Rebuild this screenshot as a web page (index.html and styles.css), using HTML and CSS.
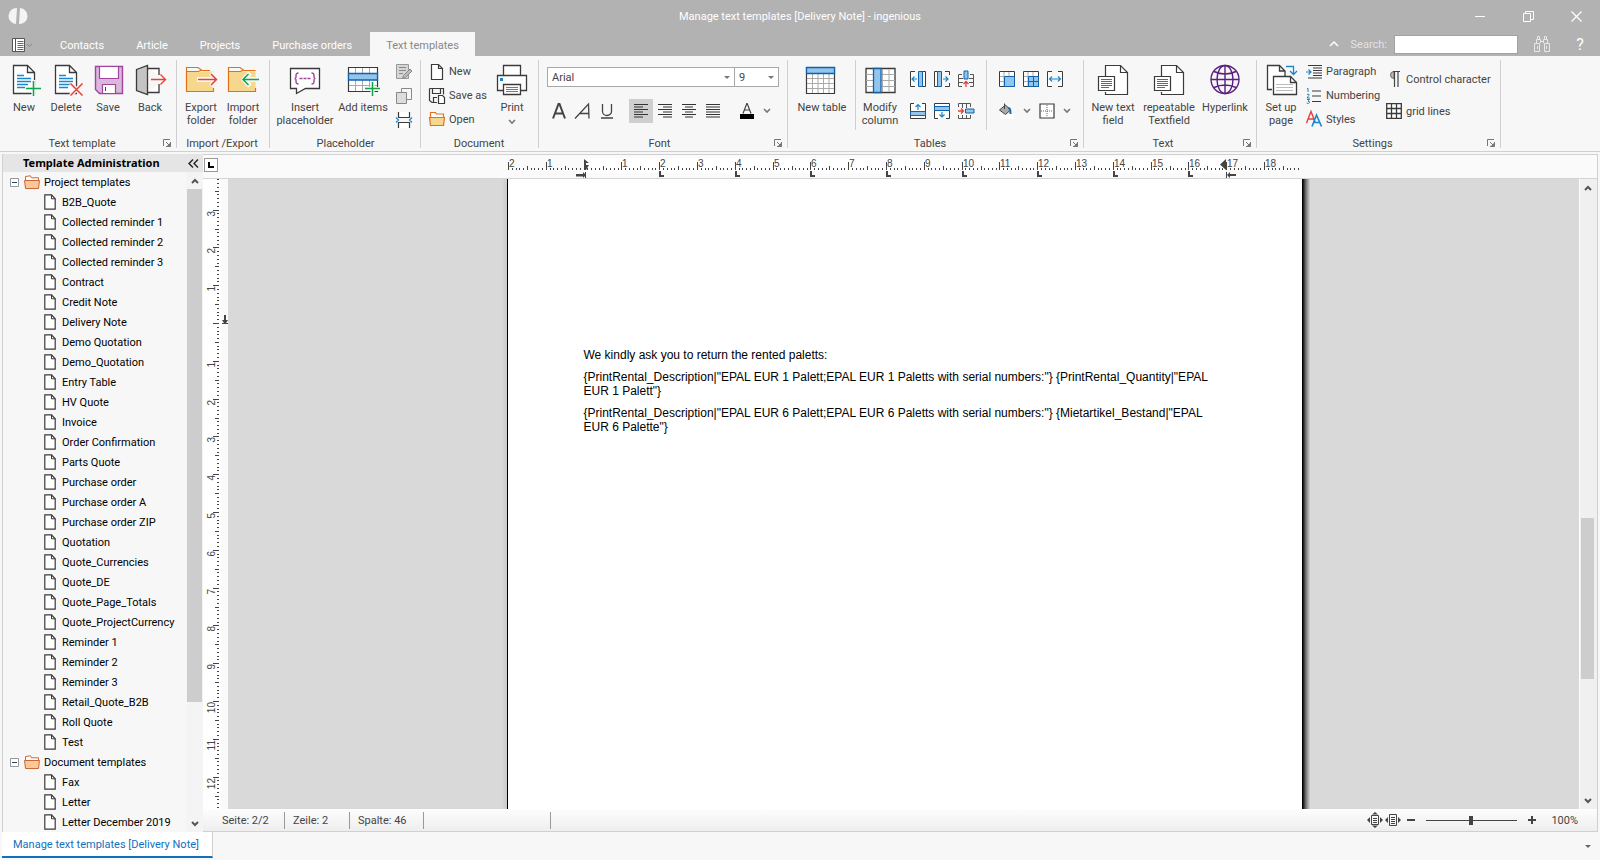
FILE: index.html
```html
<!DOCTYPE html>
<html lang="en">
<head>
<meta charset="utf-8">
<title>Manage text templates [Delivery Note] - ingenious</title>
<link rel="stylesheet" href="styles.css">
</head>
<body>
<svg class="defs" aria-hidden="true">
  <symbol id="i-chev" viewBox="0 0 8 6"><path d="M1 1l3 3 3-3" fill="none" stroke="#777" stroke-width="1.6"/></symbol>
  <symbol id="i-launch" viewBox="0 0 8 8"><path d="M.5 7V.5H7M7.500 3v4.500H3M3 3l3.500 3.500" fill="none" stroke="#777"/><path d="M7.500 3.500v4h-4z" fill="#777"/></symbol>
  <symbol id="i-page" viewBox="0 0 12 16"><path d="M.8.8h6.700l3.700 4v10.400H.8z" fill="#fff" stroke="#3a3a3a" stroke-width="1.200"/><path d="M7.500.8v4h3.700" fill="none" stroke="#3a3a3a"/></symbol>
  <symbol id="i-treefolder" viewBox="0 0 16 14"><path d="M1.500 12V1.500l5-.7 1 2h7V5" fill="#fff" stroke="#c8683a"/><path d="M.5 5.500h15l-1 8h-13z" fill="#fdc795" stroke="#c8683a"/></symbol>
  <symbol id="i-doc" viewBox="0 0 32 32"><path d="M5.500 1.500h14l7 7V29.500h-21z" fill="#fff" stroke="#3a3a3a" stroke-width="1.300"/><path d="M19.500 1.500v7h7" fill="none" stroke="#3a3a3a" stroke-width="1.300"/><path d="M9 11.500h7M9 14.500h14M9 17.500h14M9 20.500h11M9 23.500h9" stroke="#1b87c9" stroke-width="1.300"/></symbol>
  <symbol id="i-textfield" viewBox="0 0 32 32"><path d="M8.500 12V1.500h15l7 7v22h-22V28" fill="#fff" stroke="#3a3a3a" stroke-width="1.200"/><path d="M23.500 1.500v7h7" fill="none" stroke="#3a3a3a" stroke-width="1.200"/><path d="M1.500 12.500h16v14h-16z" fill="#fff" stroke="#3a3a3a" stroke-width="1.200"/><path d="M4 15.500h11M4 17.500h11M4 19.500h11M4 21.500h11M4 23.500h8" stroke="#666"/></symbol>
</svg>

<header class="titlebar">
  <svg class="logo" viewBox="0 0 16 16"><path d="M7 0 6 16A8 8 0 0 1 7 0zM10 0 9 16A8 8 0 0 0 10 0z" fill="#f4f4f4"/></svg>
  <h1 class="title">Manage text templates [Delivery Note] - ingenious</h1>
  <div class="window-buttons">
    <button aria-label="Minimise"><svg width="11" height="11" viewBox="0 0 11 11"><path d="M0 5.500h10" stroke="#fff"/></svg></button>
    <button aria-label="Restore"><svg width="11" height="11" viewBox="0 0 11 11"><path d="M.5 2.500h7v8h-7zM2.500 2.500v-2h8v8h-3" fill="none" stroke="#fff"/></svg></button>
    <button aria-label="Close"><svg width="11" height="11" viewBox="0 0 11 11"><path d="M.5.5l10 10M10.500.5l-10 10" stroke="#fff" stroke-width="1.200"/></svg></button>
  </div>
</header>

<nav class="tabs">
  <button class="app-menu" aria-label="Menu"><svg width="20" height="14" viewBox="0 0 20 14"><path d="M.5.5h12v13H.5z" fill="#fff" stroke="#555"/><path d="M3.500 0v14" stroke="#555"/><path d="M5.500 3.500h6M5.500 5.500h6M5.500 7.500h6M5.500 9.500h6M5.500 11.500h6" stroke="#666"/><path d="M15 6l2.500 2.500L20 6" fill="none" stroke="#888"/></svg></button>
  <button class="tab">Contacts</button>
  <button class="tab">Article</button>
  <button class="tab">Projects</button>
  <button class="tab">Purchase orders</button>
  <button class="tab tab-active">Text templates</button>
  <div class="tabs-tools">
    <button aria-label="Collapse ribbon"><svg width="10" height="6" viewBox="0 0 10 6"><path d="M1 5l4-4 4 4" fill="none" stroke="#fff" stroke-width="1.500"/></svg></button>
    <label class="search-label" for="search">Search:</label>
    <input class="search" id="search" type="text">
    <button class="find" aria-label="Find"><svg width="16" height="16" viewBox="0 0 16 16"><path d="M.5 7.500h5v8h-5zM10.500 7.500h5v8h-5zM2.500 7V3.500h4V7M9.500 7V3.500h4V7M3.500 3V.5h2V3M10.500 3V.5h2V3M6.500 5.500h3M3.500 10v3M12.500 10v3" fill="none" stroke="#e8e8e8"/></svg></button>
    <button class="help" aria-label="Help">?</button>
  </div>
</nav>

<section class="ribbon">
  <div class="group g-template has-launcher">
    <div class="group-body">
      <button class="big"><svg class="ico"><use href="#i-doc"/><path d="M25.500 16v16M17 24.500h16" stroke="#f7f7f7" stroke-width="4"/><path d="M25.500 17v15M18 24.500h15" stroke="#10a54a" stroke-width="1.500"/></svg><span>New</span></button>
      <button class="big"><svg class="ico"><use href="#i-doc"/><path d="M20.500 19.500l12 12M32.500 19.500l-12 12" stroke="#f7f7f7" stroke-width="4"/><path d="M20.500 19.500l12 12M32.500 19.500l-12 12" stroke="#e8403a" stroke-width="1.500"/></svg><span>Delete</span></button>
      <button class="big"><svg class="ico"><path d="M3.500 2.500h27v27h-23l-4-4z" fill="#dab8dc" stroke="#a0449c" stroke-width="1.400"/><path d="M7.500 2.500h19v12h-19zM10.500 20.500h13v9h-13z" fill="#fff" stroke="#a0449c" stroke-width="1.200"/><path d="M13.500 23v4" stroke="#444"/></svg><span>Save</span></button>
      <button class="big"><svg class="ico"><path d="M13.500 4.500H25V11M25 20v8.500H13.500" fill="#fff" stroke="#3a3a3a" stroke-width="1.300"/><path d="M2.500 5.500l11-4v29l-11-4z" fill="#c4c4c4" stroke="#3a3a3a" stroke-width="1.300"/><path d="M17 15.500h14M26.500 10.500l5 5-5 5" fill="none" stroke="#e8403a" stroke-width="1.400"/></svg><span>Back</span></button>
    </div>
    <div class="group-label">Text template</div>
    <button class="launcher" aria-label="More"><svg><use href="#i-launch"/></svg></button>
  </div>

  <div class="group g-io">
    <div class="group-body">
      <button class="big"><svg class="ico"><path d="M1.500 7.500H28.500V27.500H1.500z" fill="#f6d78e"/><path d="M12 15.500h20M26 9l6 6.500-6 6.500" fill="none" stroke="#f7f7f7" stroke-width="5"/><path d="M1.500 7.500V3.500H13l4 3h8M28.500 24v3.500h-27v-20h12l3-1.500" fill="none" stroke="#e4701e" stroke-width="1.200"/><path d="M13 15.500h18M26 10l5.500 5.500-5.500 5.500" fill="none" stroke="#e8403a" stroke-width="1.500"/></svg><span>Export folder</span></button>
      <button class="big"><svg class="ico"><path d="M1.500 7.500H28.500V27.500H1.500z" fill="#f6d78e"/><path d="M17 15.500h15M23 9l-6 6.500 6 6.500" fill="none" stroke="#f7f7f7" stroke-width="5"/><path d="M1.500 7.500V3.500H13l4 3h11.500M28.500 24v3.500h-27v-20h12l3-1.500" fill="none" stroke="#e4701e" stroke-width="1.200"/><path d="M15.500 15.500H32M21.500 10l-5.500 5.500 5.500 5.500" fill="none" stroke="#10a54a" stroke-width="1.500"/></svg><span>Import folder</span></button>
    </div>
    <div class="group-label">Import /Export</div>
  </div>

  <div class="group g-placeholder">
    <div class="group-body">
      <button class="big wide"><svg class="ico"><path d="M1.500 4.500h29v20h-14l-9 5v-5h-6z" fill="#fff" stroke="#3a3a3a" stroke-width="1.300"/><path d="M9.500 9C7 9 7 10 7 12s0 2.500-1.500 2.500C7 14.500 7 15 7 17s0 3 2.500 3M22.500 9C25 9 25 10 25 12s0 2.500 1.500 2.500C25 14.500 25 15 25 17s0 3-2.500 3" fill="none" stroke="#a0449c" stroke-width="1.500"/><path d="M10.500 14.500h11" stroke="#a0449c" stroke-width="1.500" stroke-dasharray="3 1"/></svg><span>Insert placeholder</span></button>
      <button class="big wide"><svg class="ico"><path d="M1.500 3.500h29v24h-29z" fill="#fff" stroke="#3a3a3a" stroke-width="1.200"/><path d="M8.500 4v23M15.500 4v23M22.500 4v23M2 21.500h28" stroke="#aaa"/><path d="M1.500 9.500h29v6.500h-29z" fill="#92c5eb" stroke="#1062ad" stroke-width="1.300"/><path d="M25.500 17v16M18 25h15" stroke="#f7f7f7" stroke-width="4"/><path d="M25.500 18v14M18 24.500h15" stroke="#10a54a" stroke-width="1.500"/></svg><span>Add items</span></button>
      <div class="stack">
        <button class="tool" aria-label="Edit"><svg class="sm"><path d="M.5.5h12v14H.5z" fill="#d6d6d6" stroke="#999"/><path d="M3 3.500h7M3 6.500h7M3 9.500h4" stroke="#888"/><path d="M6.500 14.500l1-3L14 5l2 2-6.500 6.500z" fill="#bbb" stroke="#888"/></svg></button>
        <button class="tool" aria-label="Copy"><svg class="sm"><path d="M5.500.5h10v11h-10z" fill="#f7f7f7" stroke="#888"/><path d="M.5 4.500h10v11H.5z" fill="#ddd" stroke="#888"/></svg></button>
        <button class="tool" aria-label="Page break"><svg class="sm"><path d="M2.500 0v5.500h11V0M2.500 16v-5.500h11V16" fill="#fff" stroke="#3a3a3a" stroke-width="1.200"/><path d="M0 5.500l2.500 2.500L0 10.500M16 5.500L13.500 8l2.500 2.500" fill="none" stroke="#1b87c9" stroke-width="1.200"/></svg></button>
      </div>
    </div>
    <div class="group-label">Placeholder</div>
  </div>

  <div class="group g-document">
    <div class="group-body">
      <div class="stack stack-grow">
        <button class="row"><svg class="sm"><path d="M2.500.5h7l4 4v11h-11zM9.500.5v4h4" fill="#fff" stroke="#3a3a3a" stroke-width="1.200"/></svg>New</button>
        <button class="row"><svg class="sm"><path d="M.5.5h14v6M8 14.500H3l-2.500-2V.5M3.500.5v5h8v-5M4.500 14V9.500H8" fill="none" stroke="#3a3a3a" stroke-width="1.200"/><path d="M9.500 7.500h4l2 2v6h-6z" fill="#fff" stroke="#3a3a3a" stroke-width="1.200"/></svg>Save as</button>
        <button class="row"><svg class="sm"><path d="M1.500 6V1.500h5l1 1.500h7V6" fill="#fff" stroke="#e4701e" stroke-width="1.200"/><path d="M.5 6.500h15l-1 8h-13z" fill="#f6d78e" stroke="#e4701e" stroke-width="1.200"/></svg>Open</button>
      </div>
      <button class="big"><svg class="ico"><path d="M7.500 1.500h17v11h-17z" fill="#fff" stroke="#3a3a3a" stroke-width="1.300"/><path d="M1.500 11.500h29v15h-29z" fill="#fff" stroke="#3a3a3a" stroke-width="1.300"/><path d="M7.500 20.500h17v10h-17z" fill="#fff" stroke="#3a3a3a" stroke-width="1.300"/><path d="M10 23.500h12M10 25.500h12M10 27.500h12" stroke="#777"/><path d="M4 14h3v3H4z" fill="#1b87c9"/></svg><span>Print</span><svg class="chev"><use href="#i-chev"/></svg></button>
    </div>
    <div class="group-label">Document</div>
  </div>

  <div class="group g-font has-launcher">
    <div class="font-body">
      <div class="combos">
        <span class="combo combo-font"><select aria-label="Font family"><option>Arial</option></select></span>
        <span class="combo combo-size"><select aria-label="Font size"><option>9</option></select></span>
      </div>
      <div class="font-tools">
        <button class="tool" aria-label="Bold"><svg class="sm"><path d="M2 15.500L7.500 1h1L14 15.500M4 10.500h8" fill="none" stroke="#444" stroke-width="2"/></svg></button>
        <button class="tool" aria-label="Italic"><svg class="sm"><path d="M0 15.500L13.500 1l.5 14.500M4.500 10.500h9" fill="none" stroke="#444" stroke-width="1.300"/></svg></button>
        <button class="tool" aria-label="Underline"><svg class="sm"><path d="M3.500 1v7.500a4.500 4 0 0 0 9 0V1M2 15h12" fill="none" stroke="#444" stroke-width="1.300"/></svg></button>
        <button class="tool pressed" aria-label="Align left"><svg class="sm"><path d="M1 1.500h14M1 4h9M1 6.500h14M1 9h9M1 11.500h14M1 14h9" stroke="#333" stroke-width="1.200"/></svg></button>
        <button class="tool" aria-label="Align right"><svg class="sm"><path d="M1 1.500h14M6 4h9M1 6.500h14M6 9h9M1 11.500h14M6 14h9" stroke="#333" stroke-width="1.200"/></svg></button>
        <button class="tool" aria-label="Centre"><svg class="sm"><path d="M1 1.500h14M4 4h8M1 6.500h14M4 9h8M1 11.500h14M4 14h8" stroke="#333" stroke-width="1.200"/></svg></button>
        <button class="tool" aria-label="Justify"><svg class="sm"><path d="M1 1.500h14M1 4h14M1 6.500h14M1 9h14M1 11.500h14M1 14h14" stroke="#333" stroke-width="1.200"/></svg></button>
        <button class="tool tool-color" aria-label="Font colour"><svg class="sm"><path d="M4 10.500L7.800.5h.4L12 10.500M5.500 7h5" fill="none" stroke="#444" stroke-width="1.200"/><path d="M1 11h14v5H1z" fill="#000"/></svg></button>
        <button class="drop" aria-label="Colour options"><svg class="chev"><use href="#i-chev"/></svg></button>
      </div>
    </div>
    <div class="group-label">Font</div>
    <button class="launcher" aria-label="More"><svg><use href="#i-launch"/></svg></button>
  </div>

  <div class="group g-tables has-launcher">
    <div class="group-body">
      <button class="big wider"><svg class="ico"><path d="M.5 3.500h28v26H.5z" fill="#fff" stroke="#3a3a3a" stroke-width="1.200"/><path d="M6.500 10v19M12 10v19M17.500 10v19M23 10v19M1 14.500h27M1 19.500h27M1 24.500h27" stroke="#aaa"/><path d="M.5 3.500h28v6H.5z" fill="#92c5eb" stroke="#1062ad" stroke-width="1.300"/></svg><span>New table</span></button>
      <span class="divider"></span>
      <button class="big"><svg class="ico"><path d="M2 4.500h29v24H2z" fill="#fff" stroke="#3a3a3a" stroke-width="1.300"/><path d="M18.500 5v23M25 5v23M2 10.500h29M2 16.500h29M2 22.500h29" stroke="#aaa"/><path d="M9.500 4.500h7.500v24H9.500z" fill="#92c5eb" stroke="#1062ad" stroke-width="1.300"/></svg><span>Modify column</span></button>
      <div class="grid3">
        <button class="tool" aria-label="Insert column left"><svg class="sm"><path d="M5 .5H.5v15H5M9 .5h6.500v15H9" fill="#fff" stroke="#3a3a3a"/><path d="M8.500.5h4v15h-4z" fill="#92c5eb" stroke="#1062ad"/><path d="M2 8h5M4.500 5.500L2 8l2.500 2.500" fill="none" stroke="#1b87c9" stroke-width="1.200"/></svg></button>
        <button class="tool" aria-label="Insert column right"><svg class="sm"><path d="M7 .5H.5v15H7M11 .5h4.500V4M11 15.500h4.500V12" fill="#fff" stroke="#3a3a3a"/><path d="M3.500.5h4v15h-4z" fill="#92c5eb" stroke="#1062ad"/><path d="M9 8h5M11.500 5.500L14 8l-2.500 2.500" fill="none" stroke="#1b87c9" stroke-width="1.200"/></svg></button>
        <button class="tool" aria-label="Delete column"><svg class="sm"><path d="M4 3.500H.5v12H4M12 3.500h3.500v12H12M1 7.500h4M1 11.500h4M11 7.500h4M11 11.500h4" fill="none" stroke="#555"/><path d="M6 0h4v8H6z" fill="#92c5eb" stroke="#1062ad"/><path d="M8 16v-5.500M5.500 13L8 10.500l2.500 2.500" fill="none" stroke="#e8403a" stroke-width="1.300"/></svg></button>
        <button class="tool" aria-label="Insert row above"><svg class="sm"><path d="M4 .5H.5v15h15V.5H12" fill="#fff" stroke="#3a3a3a"/><path d="M.5 8.500h15v4H.5z" fill="#92c5eb" stroke="#1062ad"/><path d="M8 7V1.500M5.500 4L8 1.500 10.500 4" fill="none" stroke="#1b87c9" stroke-width="1.200"/></svg></button>
        <button class="tool" aria-label="Insert row below"><svg class="sm"><path d="M4 15.500H.5V.5h15v15H12" fill="#fff" stroke="#3a3a3a"/><path d="M.5 3.500h15v4H.5z" fill="#92c5eb" stroke="#1062ad"/><path d="M8 9v5M5.500 11.500L8 14l2.500-2.500" fill="none" stroke="#1b87c9" stroke-width="1.200"/></svg></button>
        <button class="tool" aria-label="Delete row"><svg class="sm"><path d="M.5 4V.5h12V4M.5 12v3.500h12V12M4.500 1v4M8.500 1v4M4.500 12v3M8.500 12v3" fill="none" stroke="#555"/><path d="M7.500 6h8.500v4H7.500z" fill="#92c5eb" stroke="#1062ad"/><path d="M0 8h5M3 5.500L5.500 8 3 10.500" fill="none" stroke="#e8403a" stroke-width="1.300"/></svg></button>
      </div>
      <span class="divider"></span>
      <div class="cells">
        <div class="cells-row">
          <button class="tool" aria-label="Merge cells"><svg class="sm"><path d="M.5.5h15v15H.5z" fill="#fff" stroke="#3a3a3a"/><path d="M5 1v14M10 1v4M1 5.500h14M1 10.500h4" stroke="#aaa"/><path d="M5.500 5.500h10v10h-10z" fill="#92c5eb" stroke="#1062ad"/></svg></button>
          <button class="tool" aria-label="Split cells"><svg class="sm"><path d="M.5.5h15v15H.5z" fill="#fff" stroke="#3a3a3a"/><path d="M5 1v14M10 1v4M1 5.500h14M1 10.500h4" stroke="#aaa"/><path d="M5.500 5.500h10v10h-10zM10.500 5.500v10M5.500 10.500h10" fill="#92c5eb" stroke="#1062ad"/></svg></button>
          <button class="tool" aria-label="Cell width"><svg class="sm"><path d="M5 .5H.5v15H5M11 .5h4.500v15H11" fill="#fff" stroke="#3a3a3a"/><path d="M2.500 8h11M5 5.500L2.500 8 5 10.500M11 5.500L13.500 8 11 10.500" fill="none" stroke="#1b87c9" stroke-width="1.200"/></svg></button>
        </div>
        <div class="cells-row">
          <button class="tool" aria-label="Fill colour"><svg class="sm"><path d="M1 11h14v5H1z" fill="#fff"/><path d="M.5 7l6-5 5 5-5 4.500z" fill="#aaa" stroke="#444"/><path d="M5.500 6V.5" stroke="#444"/><path d="M9 5c2 0 2.500 1 2.500 6" fill="none" stroke="#1b6cad" stroke-width="2"/></svg></button>
          <button class="drop" aria-label="Fill options"><svg class="chev"><use href="#i-chev"/></svg></button>
          <button class="tool" aria-label="Borders"><svg class="sm"><path d="M1 1h14v14H1z" fill="#fff" stroke="#3a3a3a" stroke-width="1.200"/><path d="M8 2v12M2 8h12" stroke="#666" stroke-dasharray="1 1"/></svg></button>
          <button class="drop" aria-label="Border options"><svg class="chev"><use href="#i-chev"/></svg></button>
        </div>
      </div>
    </div>
    <div class="group-label">Tables</div>
    <button class="launcher" aria-label="More"><svg><use href="#i-launch"/></svg></button>
  </div>

  <div class="group g-text has-launcher">
    <div class="group-body">
      <button class="big wide"><svg class="ico"><use href="#i-textfield"/></svg><span>New text field</span></button>
      <button class="big wide"><svg class="ico"><use href="#i-textfield"/></svg><span>repeatable Textfield</span></button>
      <button class="big wide"><svg class="ico"><g fill="none" stroke="#5a1e82" stroke-width="1.400"><circle cx="16" cy="15.500" r="14"/><ellipse cx="16" cy="15.500" rx="8" ry="14"/><path d="M16 1.500v28M2 15.500h28M5 7.500q11 5 22 0M5 23.500q11-5 22 0"/></g></svg><span>Hyperlink</span></button>
    </div>
    <div class="group-label">Text</div>
    <button class="launcher" aria-label="More"><svg><use href="#i-launch"/></svg></button>
  </div>

  <div class="group g-settings has-launcher">
    <div class="group-body">
      <button class="big"><svg class="ico"><path d="M7 25.500H2.500v-24h12l5.500 5.500v5M14.500 1.500V7H20" fill="#fff" stroke="#3a3a3a" stroke-width="1.300"/><path d="M8.500 12.500h17l6 6v12h-23z" fill="#fff" stroke="#3a3a3a" stroke-width="1.300"/><path d="M25.500 12.500v6h6" fill="none" stroke="#3a3a3a" stroke-width="1.300"/><path d="M11 20.500h17M11 23.500h17M11 26.500h17" stroke="#bbb"/><path d="M21 2.500h7.500V10M25 7l3.500 3.500L32 7" fill="none" stroke="#1b87c9" stroke-width="1.300"/></svg><span>Set up page</span></button>
      <div class="stack stack-settings">
        <button class="row"><svg class="sm"><path d="M2 1.500h14M7 4h9M7 6.500h9M7 9h9M7 11.500h9M2 14h14" stroke="#3a3a3a" stroke-width="1.200"/><path d="M0 8h5M2.500 5.500L5 8l-2.500 2.500" fill="none" stroke="#1b87c9" stroke-width="1.200"/></svg>Paragraph</button>
        <button class="row"><svg class="sm"><path d="M6 3h9M6 8h9M6 13.500h9" stroke="#3a3a3a" stroke-width="1.200"/><path d="M1 1l1-.7V4M1 6.500q2.500-1 2 .7L1 10h3M1 11.500h2.500L2 13.200q2 0 1.500 1.500T.7 15" fill="none" stroke="#1b87c9"/></svg>Numbering</button>
        <button class="row"><svg class="sm"><path d="M.5 12L5 .5 9.500 12M2 8h6" fill="none" stroke="#e8403a" stroke-width="1.400"/><path d="M6 15.500L10.500 4 15.500 15.500M7.500 11.500h6" fill="none" stroke="#1b87c9" stroke-width="1.600"/></svg>Styles</button>
      </div>
      <div class="stack stack-tall">
        <button class="row"><svg class="sm"><path d="M8 .5a3.500 3.500 0 0 0 0 7z" fill="#bbb" stroke="#666"/><path d="M7 .5h7M8.500.5V16M12 .5V16" stroke="#444" stroke-width="1.200"/></svg>Control character</button>
        <button class="row"><svg class="sm"><path d="M.7.7h14.600v14.600H.7zM5.500.7v14.600M10.500.7v14.600M.7 5.500h14.600M.7 10.500h14.600" fill="#fff" stroke="#3a3a3a" stroke-width="1.300"/></svg>grid lines</button>
      </div>
    </div>
    <div class="group-label">Settings</div>
    <button class="launcher" aria-label="More"><svg><use href="#i-launch"/></svg></button>
  </div>
</section>

<main class="workspace">
  <aside class="sidebar">
    <div class="side-head">
      <h2>Template Administration</h2>
      <button aria-label="Collapse panel"><svg width="11" height="9" viewBox="0 0 11 9"><path d="M5 .5l-4 4 4 4M10 .5l-4 4 4 4" fill="none" stroke="#222" stroke-width="1.400"/></svg></button>
    </div>
    <div class="side-body">
      <ul class="tree" id="tree"></ul>
      <div class="vscroll tree-scroll">
        <button aria-label="Scroll up"><svg width="8" height="6" viewBox="0 0 8 6"><path d="M1 5l3-3 3 3" fill="none" stroke="#555" stroke-width="2"/></svg></button>
        <div class="track"><div class="thumb"></div></div>
        <button aria-label="Scroll down"><svg width="8" height="6" viewBox="0 0 8 6"><path d="M1 1l3 3 3-3" fill="none" stroke="#555" stroke-width="2"/></svg></button>
      </div>
    </div>
  </aside>

  <section class="editor">
    <div class="hruler-row">
      <button class="tab-kind" aria-label="Tab type"><svg width="6" height="6" viewBox="0 0 6 6"><path d="M1 0v5h5" fill="none" stroke="#000" stroke-width="2"/></svg></button>
      <svg class="hruler" id="hruler"></svg>
    </div>
    <div class="canvas-row">
      <svg class="vruler" id="vruler"></svg>
      <div class="canvas">
        <article class="page">
          <p>We kindly ask you to return the rented paletts:</p>
          <p>{PrintRental_Description|"EPAL EUR 1 Palett;EPAL EUR 1 Paletts with serial numbers:"} {PrintRental_Quantity|"EPAL EUR 1 Palett"}</p>
          <p>{PrintRental_Description|"EPAL EUR 6 Palett;EPAL EUR 6 Paletts with serial numbers:"} {Mietartikel_Bestand|"EPAL EUR 6 Palette"}</p>
        </article>
      </div>
      <div class="vscroll page-scroll">
        <button aria-label="Scroll up"><svg width="8" height="6" viewBox="0 0 8 6"><path d="M1 5l3-3 3 3" fill="none" stroke="#555" stroke-width="2"/></svg></button>
        <div class="track"><div class="thumb"></div></div>
        <button aria-label="Scroll down"><svg width="8" height="6" viewBox="0 0 8 6"><path d="M1 1l3 3 3-3" fill="none" stroke="#555" stroke-width="2"/></svg></button>
      </div>
    </div>
    <footer class="status">
      <span class="status-cell cell-page">Seite: 2/2</span>
      <span class="status-cell cell-line">Zeile: 2</span>
      <span class="status-cell cell-column">Spalte: 46</span>
      <span class="status-cell cell-empty"></span>
      <div class="zoom">
        <button aria-label="Whole page"><svg width="16" height="16" viewBox="0 0 16 16"><path d="M4.500 3.500h7v9h-7zM6 6.500h4M6 8.500h4M6 10.500h4" fill="none" stroke="#444"/><path d="M0 8l3-3v6zM16 8l-3-3v6zM8 0l3 2.500H5zM8 16l3-2.500H5z" fill="#444"/></svg></button>
        <button aria-label="Page width"><svg width="16" height="16" viewBox="0 0 16 16"><path d="M4.500 2.500h7v11h-7zM6 5.500h4M6 7.500h4M6 9.500h4M6 11.500h4" fill="none" stroke="#444"/><path d="M0 8l3-3v6zM16 8l-3-3v6z" fill="#444"/></svg></button>
        <button class="zoom-out" aria-label="Zoom out"><svg width="8" height="8" viewBox="0 0 8 8"><path d="M0 4h8" stroke="#444" stroke-width="2"/></svg></button>
        <input class="zoom-slider" type="range" min="0" max="100" value="49" aria-label="Zoom">
        <button class="zoom-in" aria-label="Zoom in"><svg width="8" height="8" viewBox="0 0 8 8"><path d="M0 4h8M4 0v8" stroke="#444" stroke-width="2"/></svg></button>
        <span class="zoom-value">100%</span>
      </div>
    </footer>
  </section>
</main>

<div class="doc-tabs">
  <button class="doc-tab">Manage text templates [Delivery Note]</button>
  <button class="doc-more" aria-label="Open documents"><svg width="6" height="3" viewBox="0 0 6 3"><path d="M0 0h6L3 3z" fill="#666"/></svg></button>
</div>
<script src="script.js"></script>
</body>
</html>
```

FILE: styles.css
```css
* { box-sizing: border-box; }
body {
  margin: 0;
  height: 100vh;
  display: flex;
  flex-direction: column;
  overflow: hidden;
  background: #f7f7f7;
  color: #444;
  font: 11px/13px Roboto, sans-serif;
}
button, input, select { font: inherit; color: inherit; }
button { border: 0; padding: 0; background: none; }
svg { display: block; flex: none; overflow: visible; }
.defs { position: absolute; width: 0; height: 0; }

/* Title bar and tabs */
.titlebar {
  display: grid;
  grid-template-columns: 1fr auto 1fr;
  align-items: center;
  height: 32px;
  background: #b2b2b2;
  color: #fff;
}
.logo { width: 16px; height: 16px; margin-left: 10px; }
.title { margin: 0; font: inherit; }
.window-buttons { display: flex; justify-content: flex-end; }
.window-buttons button { width: 48px; height: 32px; display: grid; place-items: center; }
.tabs {
  display: flex;
  height: 24px;
  background: #b2b2b2;
  color: #fff;
}
.app-menu { width: 44px; padding: 2px 0 0 12px; }
.tab { padding: 2px 16px 0; }
.tab-active { margin-left: 2px; background: #f7f7f7; color: #888; }
.tabs-tools { margin-left: auto; display: flex; align-items: center; }
.search-label { margin: 0 7px 0 12px; color: #e2e2e2; }
.search { width: 124px; height: 19px; border: 1px solid #a2a2a2; background: #fff; color: #444; }
.find { margin: 0 10px 0 16px; }
.help { width: 40px; font-size: 16px; }

/* Ribbon */
.ribbon { display: flex; height: 96px; flex: none; padding: 4px 0 3px; border-bottom: 1px solid #d0d0d0; }
.group { position: relative; display: flex; flex-direction: column; flex: none; border-right: 1px solid #d0d0d0; }
.group-body, .font-body { display: flex; height: 71px; flex: none; }
.group-label { margin-top: 5px; padding-right: 5px; text-align: center; line-height: 15px; }
.has-launcher .group-label { padding-right: 15px; }
.g-document .group-label { padding-right: 0; }
.launcher { position: absolute; right: 5px; bottom: 1px; width: 8px; height: 8px; }
.launcher svg { width: 8px; height: 8px; }
.g-template { width: 177px; padding-left: 3px; }
.g-io { width: 93px; padding-left: 3px; }
.g-placeholder { width: 151px; padding-left: 6px; }
.g-document { width: 118px; padding: 0 5px 0 4px; }
.g-font { width: 249px; padding-left: 8px; }
.g-tables { width: 296px; padding-left: 4px; }
.g-text { width: 173px; padding-left: 1px; }
.g-settings { width: 244px; padding-left: 3px; }
.big { display: flex; flex-direction: column; align-items: center; width: 42px; padding-top: 4px; gap: 5px; line-height: 13px; flex: none; }
.wide { width: 56px; }
.g-placeholder .wide { width: 58px; }
.wider { width: 60px; }
.ico { width: 32px; height: 32px; }
.sm { width: 16px; height: 16px; }
.chev { width: 8px; height: 6px; }
.stack { display: flex; flex-direction: column; }
.stack-grow { flex: 1; }
.stack-settings { width: 80px; }
.stack-tall { padding-top: 3px; }
.row { display: flex; align-items: center; gap: 4px; height: 24px; padding-left: 4px; white-space: nowrap; }
.stack-tall .row { height: 32px; }
.tool { width: 24px; height: 24px; display: grid; place-items: center; flex: none; }
.drop { width: 16px; height: 24px; display: grid; place-items: center; }
.pressed { background: #cfcfcf; }
.divider { width: 1px; height: 70px; margin: 0 3px; background: #d0d0d0; }
.grid3 { display: grid; grid-template-columns: repeat(3, 24px); grid-auto-rows: 32px; align-items: center; padding: 3px 5px 0; }
.cells { padding: 3px 0 0 5px; }
.cells-row { display: flex; align-items: center; height: 32px; }
.font-body { flex-direction: column; padding-top: 7px; }
.combos { display: flex; }
.combo { position: relative; }
.combo::after {
  content: "";
  position: absolute;
  right: 5px;
  top: 9px;
  border: 3px solid transparent;
  border-top-color: #777;
  border-bottom: 0;
}
.combo select { display: block; width: 100%; height: 20px; padding: 0 4px; border: 1px solid #a8a8a8; background: #fff; appearance: none; }
.combo-font { width: 188px; }
.combo-size { width: 45px; margin-left: -1px; }
.font-tools { display: flex; align-items: center; margin-top: 12px; }
.font-tools .pressed { margin-left: 10px; }
.tool-color { margin-left: 10px; }

/* Workspace */
.workspace { flex: 1; min-height: 0; display: flex; padding: 2px 2px 0; }
.sidebar { width: 201px; flex: none; display: flex; flex-direction: column; border-left: 1px solid #d0d0d0; color: #000; }
.side-head { display: flex; align-items: center; height: 18px; flex: none; background: #e5e5e5; padding-right: 4px; }
.side-head h2 { flex: 1; margin: 0; padding-left: 20px; font: 700 11px/18px "Noto Sans", sans-serif; }
.side-body { flex: 1; min-height: 0; display: flex; }
.tree, .tree ul { list-style: none; margin: 0; padding: 0; }
.tree { flex: 1; overflow: hidden; }
.node { display: flex; align-items: center; height: 20px; white-space: nowrap; }
.folder { padding-left: 7px; gap: 4px; }
.folder .tf { width: 16px; height: 14px; }
.expander { width: 9px; height: 9px; margin-right: 1px; }
.leaf { padding-left: 41px; gap: 6px; }
.leaf svg { width: 12px; height: 16px; }
.vscroll { display: flex; flex-direction: column; flex: none; background: #f4f4f4; }
.vscroll button { height: 17px; display: grid; place-items: center; }
.track { flex: 1; display: flex; flex-direction: column; }
.thumb { background: #cdcdcd; }
.tree-scroll { width: 17px; padding: 0 1px; }
.tree-scroll .thumb { flex: 0 0 82%; }

.editor { flex: 1; min-width: 0; display: flex; flex-direction: column; border: 1px solid #d0d0d0; border-left: 0; background: #fafafa; }
.hruler-row { display: grid; grid-template-columns: 25px 1fr 18px; height: 24px; flex: none; border-bottom: 1px solid #d4d4d4; }
.tab-kind { width: 14px; height: 14px; margin: 3px 0 0 1px; border: 1px solid #999; background: #fff; display: grid; place-items: center; }
.hruler { width: 794px; height: 23px; justify-self: center; margin-left: 2px; }
.canvas-row { flex: 1; min-height: 0; display: flex; }
.vruler { width: 25px; height: 100%; overflow: hidden; }
.ruler-text { font: 10px "Liberation Sans", sans-serif; fill: #444; }
.canvas { flex: 1; min-width: 0; background: #d9d9d9; display: flex; justify-content: center; padding-left: 2px; overflow: hidden; }
.page {
  width: 794px;
  padding: 169px 76px 0;
  background: #fff;
  box-shadow: -1px 0 #000, 1px 0 #000, 2px 0 #222, 3px 0 #444, 4px 0 #666, 5px 0 #808080, 6px 0 #999, 7px 0 #b0b0b0, 8px 0 #c8c8c8, -4px 0 3px #ccc;
  color: #000;
  font: 12px/14px "Liberation Sans", Arial, sans-serif;
}
.page p { margin: 0 0 8px; }
.page-scroll { width: 18px; padding-right: 2px; border-left: 1px solid #fff; background: #f0f0f0; }
.page-scroll .thumb { width: 13px; align-self: center; flex: 0 0 27%; }
.page-scroll .track::before { content: ""; flex: 0 0 54%; }

.status { display: flex; align-items: center; height: 22px; flex: none; background: linear-gradient(#fdfdfd, #eee); }
.status-cell { height: 17px; line-height: 17px; padding-left: 8px; border-right: 1px solid #999; }
.cell-page { width: 82px; padding-left: 19px; }
.cell-line { width: 65px; }
.cell-column { width: 74px; }
.cell-empty { width: 127px; }
.zoom { margin-left: auto; display: flex; align-items: center; padding-right: 19px; gap: 2px; }
.zoom-out { margin-left: 4px; }
.zoom-slider { width: 91px; height: 12px; margin: 0 9px; appearance: none; background: linear-gradient(#444, #444) center / 100% 1px no-repeat; }
.zoom-slider::-webkit-slider-thumb { appearance: none; width: 4px; height: 9px; background: #444; }
.zoom-value { margin-left: 13px; }

/* Document tabs */
.doc-tabs { display: flex; justify-content: space-between; height: 28px; flex: none; padding: 0 2px; }
.doc-tab { height: 26px; padding: 0 13px 0 11px; border-right: 1px solid #d0d0d0; border-bottom: 2px solid #1070c0; background: #fff; color: #1070c0; }
.doc-more { padding-right: 7px; }
```

FILE: script.js
```js
const NS = "http://www.w3.org/2000/svg";
const CM = 37.8;

function add(parent, name, attrs, text) {
  const el = document.createElementNS(NS, name);
  for (const key in attrs) el.setAttribute(key, attrs[key]);
  if (text !== undefined) el.textContent = text;
  parent.appendChild(el);
  return el;
}

function drawHorizontal(svg) {
  const zero = 75.6;
  add(svg, "rect", { x: 76, y: 3, width: 642, height: 15, fill: "#fff" });
  for (let t = -20; t <= 189; t++) {
    const x = Math.round(zero + (t * CM) / 10);
    const h = t % 10 === 0 ? 8 : t % 5 === 0 ? 4 : 2;
    if (t === 0) continue;
    add(svg, "rect", { x, y: 15 - h, width: 1, height: h, fill: "#444" });
    if (t % 10 === 0) {
      add(svg, "text", { x: x + 1, y: 12, class: "ruler-text" }, Math.abs(t / 10));
    }
    if (t > 0 && t < 170 && t % 20 === 0) {
      add(svg, "path", { d: `M${x + 1} 16v5h4`, fill: "none", stroke: "#444", "stroke-width": 2 });
    }
  }
  add(svg, "path", { d: "M76 4l5 4h-3v2h3l-3 5h-2zM68 19h7v-2l2 2v-2h1v6h-1v-2l-2 2v-1.500h-7z", fill: "#444" });
  add(svg, "path", { d: "M718 4v11l-6-5.500zM718 17h1v3l3-3v2h6v2h-6v2l-3-3v3h-1z", fill: "#444" });
}

function drawVertical(svg) {
  const zero = 144;
  add(svg, "rect", { x: 0, y: 0, width: 18, height: "100%", fill: "#fff" });
  const last = Math.floor(((svg.clientHeight - zero) / CM) * 10);
  for (let t = -38; t <= last; t++) {
    const y = Math.round(zero + (t * CM) / 10);
    const w = t % 10 === 0 ? 6 : t % 5 === 0 ? 4 : 2;
    add(svg, "rect", { x: 16 - w, y, width: w, height: 1, fill: "#444" });
    if (t % 10 === 0 && t !== 0) {
      add(svg, "text", {
        class: "ruler-text", "text-anchor": "end",
        transform: `translate(12 ${y + 1}) rotate(-90)`
      }, Math.abs(t / 10));
    }
  }
  add(svg, "path", { d: "M21 136h2v5h2l-2 3h2v1h-6v-1h2l-2-3h2z", fill: "#444" });
}

const folders = [
  ["Project templates", ["B2B_Quote", "Collected reminder 1", "Collected reminder 2", "Collected reminder 3",
    "Contract", "Credit Note", "Delivery Note", "Demo Quotation", "Demo_Quotation", "Entry Table", "HV Quote",
    "Invoice", "Order Confirmation", "Parts Quote", "Purchase order", "Purchase order A", "Purchase order ZIP",
    "Quotation", "Quote_Currencies", "Quote_DE", "Quote_Page_Totals", "Quote_ProjectCurrency", "Reminder 1",
    "Reminder 2", "Reminder 3", "Retail_Quote_B2B", "Roll Quote", "Test"]],
  ["Document templates", ["Fax", "Letter", "Letter December 2019"]]
];

document.getElementById("tree").innerHTML = folders.map(([name, items]) => `
  <li>
    <div class="node folder">
      <svg class="expander" viewBox="0 0 9 9"><path d="M.5.5h8v8h-8z" fill="#fff" stroke="#999"/><path d="M2 4.500h5" stroke="#246"/></svg>
      <svg class="tf"><use href="#i-treefolder"/></svg><span>${name}</span>
    </div>
    <ul>${items.map(item => `<li class="node leaf"><svg><use href="#i-page"/></svg><span>${item}</span></li>`).join("")}</ul>
  </li>`).join("");

drawHorizontal(document.getElementById("hruler"));
drawVertical(document.getElementById("vruler"));
```
